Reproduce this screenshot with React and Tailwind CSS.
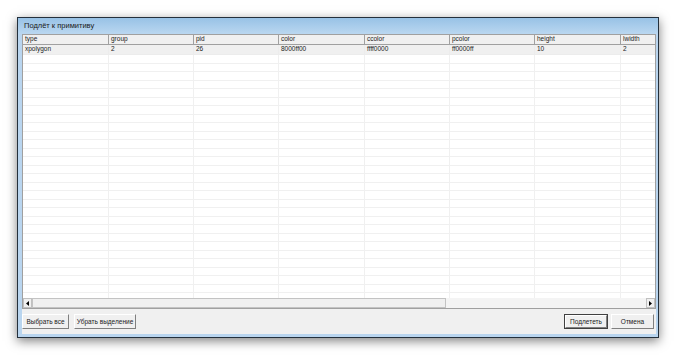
import React from "react";

const cols = [
  { name: "type", w: 86, v: "xpolygon" },
  { name: "group", w: 85, v: "2" },
  { name: "pid", w: 85, v: "26" },
  { name: "color", w: 86, v: "8000ff00" },
  { name: "ccolor", w: 85, v: "ffff0000" },
  { name: "pcolor", w: 85, v: "ff0000ff" },
  { name: "height", w: 86, v: "10" },
  { name: "lwidth", w: 60, v: "2" },
];

function Btn({ children, def, className = "" }) {
  return (
    <div
      className={
        "h-[15px] flex items-center justify-center bg-[#f0f0f0] " +
        (def
          ? "border border-[#404040] "
          : "border-t border-l border-t-[#ffffff] border-l-[#ffffff] border-b border-r border-b-[#808080] border-r-[#808080] ") +
        className
      }
    >
      {def ? (
        <div className="w-full h-full flex items-center justify-center border-t border-l border-t-[#ffffff] border-l-[#ffffff] border-b border-r border-b-[#808080] border-r-[#808080]">
          {children}
        </div>
      ) : (
        children
      )}
    </div>
  );
}

export default function App() {
  const emptyRows = Array.from({ length: 30 });
  return (
    <div
      className="w-[677px] h-[355px] bg-white pt-[17px] pl-[17px] overflow-hidden text-[#222]"
      style={{ fontFamily: '"Liberation Sans", "DejaVu Sans", sans-serif' }}
    >
      <div className="w-[642px] h-[321px] border border-[#24303c] bg-[#b9d5ef] shadow-[0_3px_10px_rgba(0,0,0,0.5)] flex flex-col">
        <div className="h-[16px] flex items-center pl-[6px] bg-gradient-to-b from-[#98c2e6] to-[#bad7f0] text-[7.5px] text-[#1a1a1a]">
          Подлёт к примитиву
        </div>
        <div className="ml-[4px] mr-[2px] h-[300px] bg-[#f0f0f0] flex flex-col">
          <div className="h-[275px] border border-[#a0a0a0] bg-white flex flex-col overflow-hidden text-[6.5px]">
            <div className="h-[10px] flex shrink-0 bg-[#f0f0f0] border-b border-[#a0a0a0]">
              {cols.map((c, i) => (
                <div
                  key={c.name}
                  style={{ width: c.w }}
                  className={"shrink-0 flex items-center pl-[2px] leading-none " + (i < cols.length - 1 ? "border-r border-[#a0a0a0]" : "")}
                >
                  {c.name}
                </div>
              ))}
            </div>
            <div className="flex-1 overflow-hidden">
              <div className="h-[10px] flex bg-[#f0f0f0] border-b border-[#ececec]">
                {cols.map((c) => (
                  <div key={c.name} style={{ width: c.w }} className="shrink-0 flex items-center pl-[2px] leading-none border-r border-[#ececec]">
                    {c.v}
                  </div>
                ))}
              </div>
              {emptyRows.map((_, r) => (
                <div key={r} className="h-[8.5px] flex border-b border-[#f0f0f0]">
                  {cols.map((c) => (
                    <div key={c.name} style={{ width: c.w }} className="shrink-0 border-r border-[#f0f0f0]" />
                  ))}
                </div>
              ))}
            </div>
            <div className="h-[10px] shrink-0 flex bg-[#f4f4f4]">
              <div className="w-[9px] h-[10px] bg-[#f0f0f0] border border-[#c0c0c0] flex items-center justify-center">
                <svg width="3" height="5" viewBox="0 0 3 5"><path d="M3 0 L0 2.5 L3 5 Z" fill="#000" /></svg>
              </div>
              <div className="w-[414px] h-[10px] bg-[#f0f0f0] border border-[#c3c3c3]" />
              <div className="flex-1" />
              <div className="w-[9px] h-[10px] bg-[#f0f0f0] border border-[#c0c0c0] flex items-center justify-center">
                <svg width="3" height="5" viewBox="0 0 3 5"><path d="M0 0 L3 2.5 L0 5 Z" fill="#000" /></svg>
              </div>
            </div>
          </div>
          <div className="flex items-center mt-[5px] text-[6.5px]">
            <Btn className="w-[47px]">Выбрать все</Btn>
            <Btn className="w-[62px] ml-[5px]">Убрать выделение</Btn>
            <div className="flex-1" />
            <Btn def className="w-[44px]">Подлететь</Btn>
            <Btn className="w-[43px] ml-[3px] mr-[2px]">Отмена</Btn>
          </div>
        </div>
      </div>
    </div>
  );
}
